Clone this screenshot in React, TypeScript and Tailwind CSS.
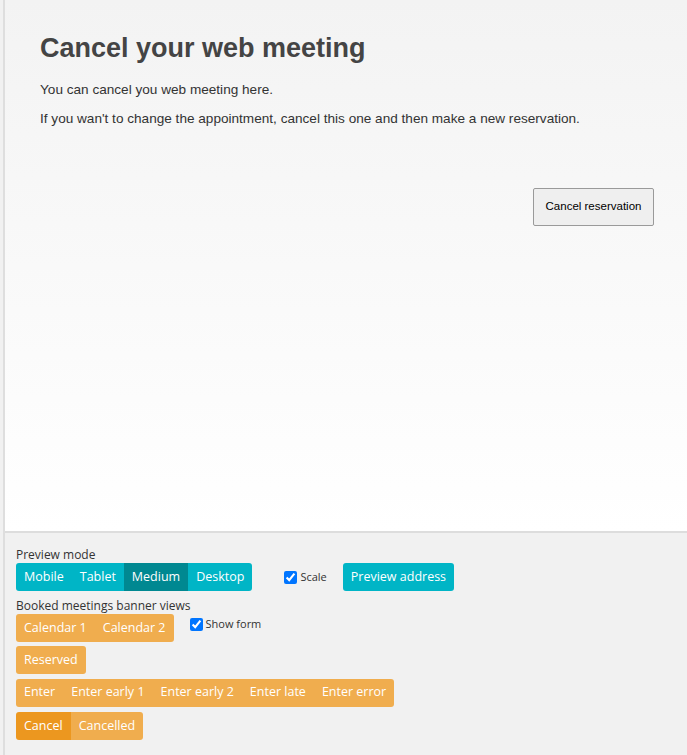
import React from "react";

const teal = ["Mobile", "Tablet", "Medium", "Desktop"];

function Group({ items, active, color, activeColor }: { items: string[]; active?: string; color: string; activeColor: string }) {
  return (
    <div className="inline-flex rounded-[3px] overflow-hidden">
      {items.map((it) => (
        <span
          key={it}
          className={`h-7 px-2 flex items-center text-[12.5px] text-white ${it === active ? activeColor : color}`}
        >
          {it}
        </span>
      ))}
    </div>
  );
}

export default function App() {
  const osans = { fontFamily: '"Open Sans", "Noto Sans", sans-serif' };
  return (
    <div className="w-[687px] h-[755px] bg-[#f1f1f1] pl-[3px] overflow-hidden">
      <div className="h-full border-l-2 border-[#dedede] flex flex-col">
        {/* preview area */}
        <div
          className="h-[533px] border-b-2 border-[#dddddd] bg-gradient-to-b from-[#f3f3f3] to-white pl-[35px] pr-[33px] pt-[32px]"
          style={{ fontFamily: '"Liberation Sans", Arial, sans-serif' }}
        >
          <h1 className="text-[27px] font-bold text-[#444] leading-[32px]">Cancel your web meeting</h1>
          <p className="mt-[16px] text-[13.6px] text-[#333] leading-[20px]">You can cancel you web meeting here.</p>
          <p className="mt-[9px] text-[13.6px] text-[#333] leading-[20px]">
            If you wan't to change the appointment, cancel this one and then make a new reservation.
          </p>
          <div className="flex justify-end mt-[59px]">
            <button className="w-[121px] h-[38px] border border-[#9a9a9a] bg-[#efefef] rounded-[2px] text-[11.5px] text-black">
              Cancel reservation
            </button>
          </div>
        </div>

        {/* controls */}
        <div className="pl-[11px] pt-[13px] text-[#333]" style={osans}>
          <div className="text-[12px] leading-[17px]">Preview mode</div>
          <div className="flex items-center">
            <Group items={teal} active="Medium" color="bg-[#00b5c6]" activeColor="bg-[#008891]" />
            <label className="ml-[32px] flex items-center gap-[3px] text-[11px]">
              <input type="checkbox" defaultChecked className="w-[13px] h-[13px] m-0" />
              Scale
            </label>
            <span className="ml-[16px] h-7 px-2 flex items-center rounded-[3px] bg-[#00b5c6] text-white text-[12.5px]">
              Preview address
            </span>
          </div>
          <div className="mt-[6px] text-[12px] leading-[17px]">Booked meetings banner views</div>
          <div className="flex items-start">
            <Group items={["Calendar 1", "Calendar 2"]} color="bg-[#f0ad4e]" activeColor="bg-[#ec971f]" />
            <label className="ml-[16px] mt-[2px] flex items-center gap-[3px] text-[11px]">
              <input type="checkbox" defaultChecked className="w-[13px] h-[13px] m-0" />
              Show form
            </label>
          </div>
          <div className="mt-[4px]">
            <Group items={["Reserved"]} color="bg-[#f0ad4e]" activeColor="bg-[#ec971f]" />
          </div>
          <div className="mt-[4px]">
            <Group
              items={["Enter", "Enter early 1", "Enter early 2", "Enter late", "Enter error"]}
              color="bg-[#f0ad4e]"
              activeColor="bg-[#ec971f]"
            />
          </div>
          <div className="mt-[5px]">
            <Group items={["Cancel", "Cancelled"]} active="Cancel" color="bg-[#f0ad4e]" activeColor="bg-[#ec971f]" />
          </div>
        </div>
      </div>
    </div>
  );
}
